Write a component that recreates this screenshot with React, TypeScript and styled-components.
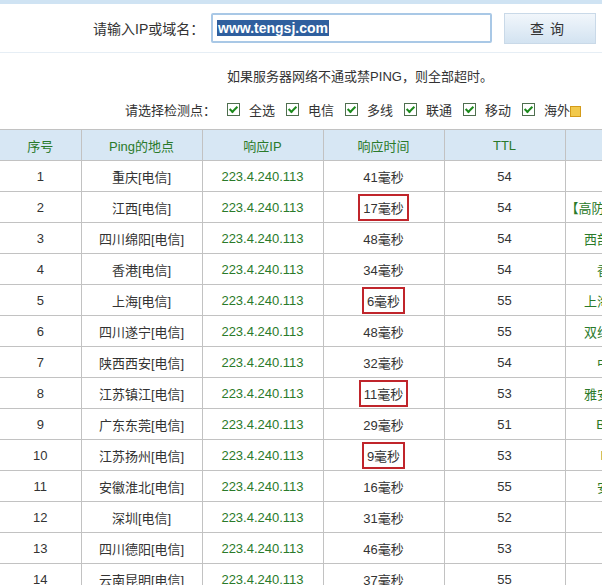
import React from 'react';
import styled, { createGlobalStyle } from 'styled-components';

const Global = createGlobalStyle`
  body { margin: 0; overflow: hidden; background: #fff;
    font-family: "Liberation Sans", "Noto Sans CJK SC", sans-serif; font-size: 13px; color: #333; }
`;

const Page = styled.div`width: 602px; overflow: hidden;`;
const TopStrip = styled.div`height: 4px; background: #cfe3f3;`;
const SearchRow = styled.div`
  display: flex; align-items: center; height: 48px; padding-left: 93px;
  border-bottom: 1px solid #e6eef5;
`;
const Label = styled.span`font-size: 14px; color: #333; width: 118px;`;
const Input = styled.div`
  width: 281px; border: 2px solid #a9c8e6; border-radius: 2px;
  display: flex; align-items: center; padding-left: 4px; box-sizing: border-box; height: 30px;
  span { background: #2f5f9e; color: #fff; font-weight: bold; font-size: 14px; padding: 0 1px; }
`;
const Button = styled.div`
  margin-left: 12px; width: 90px; height: 29px; display: flex; align-items: center; justify-content: center;
  background: linear-gradient(#f1f6fb, #d3e3f1); border: 1px solid #c9d9e8; font-size: 14px; letter-spacing: 6px;
`;
const Notice = styled.div`text-align: center; margin-top: 13px; padding-left: 118px; font-size: 13px;`;
const Checks = styled.div`
  display: flex; align-items: center; margin-top: 15px; padding-left: 125px; font-size: 13px;
`;
const Item = styled.span`display: inline-flex; align-items: center; margin-left: 11px;`;
const Box = styled.span`
  width: 11px; height: 11px; border: 1px solid #4f6f4f; display: inline-flex; align-items: center;
  justify-content: center; margin-right: 9px; background: #fff;
  &::after { content: ''; width: 3px; height: 6px; border: solid #1c8a1c; border-width: 0 2px 2px 0; transform: rotate(45deg) translate(-1px,-1px); }
`;
const Help = styled.span`width: 9px; height: 9px; background: #f2c94c; border: 1px solid #d49b1a; display: inline-block; margin-top: 3px;`;

const Table = styled.table`
  margin-top: 10px; border-collapse: collapse; table-layout: fixed; width: 655px;
  td, th { border: 1px solid #c2c2c2; height: 30px; text-align: center; font-weight: normal; font-size: 13px;
    white-space: nowrap; overflow: visible; padding: 0; }
  th { background: #d7e7f4; color: #2a7a2a; }
  td:first-child, th:first-child { border-left: none; }
`;
const Green = styled.td`color: #2a7a2a;`;
const Mark = styled.span<{ $on: boolean }>`
  display: inline-block; padding: 2px 3px; border: 2px solid ${p => (p.$on ? '#c0252b' : 'transparent')};
`;

const rows: [string, string, string, string, boolean, string][] = [
  ['1', '重庆[电信]', '223.4.240.113', '41毫秒', false, '54'],
  ['2', '江西[电信]', '223.4.240.113', '17毫秒', true, '54'],
  ['3', '四川绵阳[电信]', '223.4.240.113', '48毫秒', false, '54'],
  ['4', '香港[电信]', '223.4.240.113', '34毫秒', false, '54'],
  ['5', '上海[电信]', '223.4.240.113', '6毫秒', true, '55'],
  ['6', '四川遂宁[电信]', '223.4.240.113', '48毫秒', false, '55'],
  ['7', '陕西西安[电信]', '223.4.240.113', '32毫秒', false, '54'],
  ['8', '江苏镇江[电信]', '223.4.240.113', '11毫秒', true, '53'],
  ['9', '广东东莞[电信]', '223.4.240.113', '29毫秒', false, '51'],
  ['10', '江苏扬州[电信]', '223.4.240.113', '9毫秒', true, '53'],
  ['11', '安徽淮北[电信]', '223.4.240.113', '16毫秒', false, '55'],
  ['12', '深圳[电信]', '223.4.240.113', '31毫秒', false, '52'],
  ['13', '四川德阳[电信]', '223.4.240.113', '46毫秒', false, '53'],
  ['14', '云南昆明[电信]', '223.4.240.113', '37毫秒', false, '55'],
];
const extra = ['', '【高防服务器】', '西部数码', '香港', '上海电信', '双线机房', '中国', '雅安电信', 'BGP', 'Diy', '安徽', '3', '加', ''];

export default function App() {
  return (
    <Page>
      <Global />
      <TopStrip />
      <SearchRow>
        <Label>请输入IP或域名：</Label>
        <Input><span>www.tengsj.com</span></Input>
        <Button>查询</Button>
      </SearchRow>
      <Notice>如果服务器网络不通或禁PING，则全部超时。</Notice>
      <Checks>
        请选择检测点：
        {['全选', '电信', '多线', '联通', '移动', '海外'].map(t => (
          <Item key={t}><Box />{t}</Item>
        ))}
        <Help />
      </Checks>
      <Table>
        <colgroup>
          <col style={{ width: 81 }} /><col style={{ width: 121 }} /><col style={{ width: 121 }} />
          <col style={{ width: 121 }} /><col style={{ width: 121 }} /><col style={{ width: 90 }} />
        </colgroup>
        <thead>
          <tr><th>序号</th><th>Ping的地点</th><th>响应IP</th><th>响应时间</th><th>TTL</th><th></th></tr>
        </thead>
        <tbody>
          {rows.map((r, i) => (
            <tr key={r[0]}>
              <td>{r[0]}</td><td>{r[1]}</td><Green>{r[2]}</Green>
              <td><Mark $on={r[4]}>{r[3]}</Mark></td><td>{r[5]}</td><Green>{extra[i]}</Green>
            </tr>
          ))}
        </tbody>
      </Table>
    </Page>
  );
}
